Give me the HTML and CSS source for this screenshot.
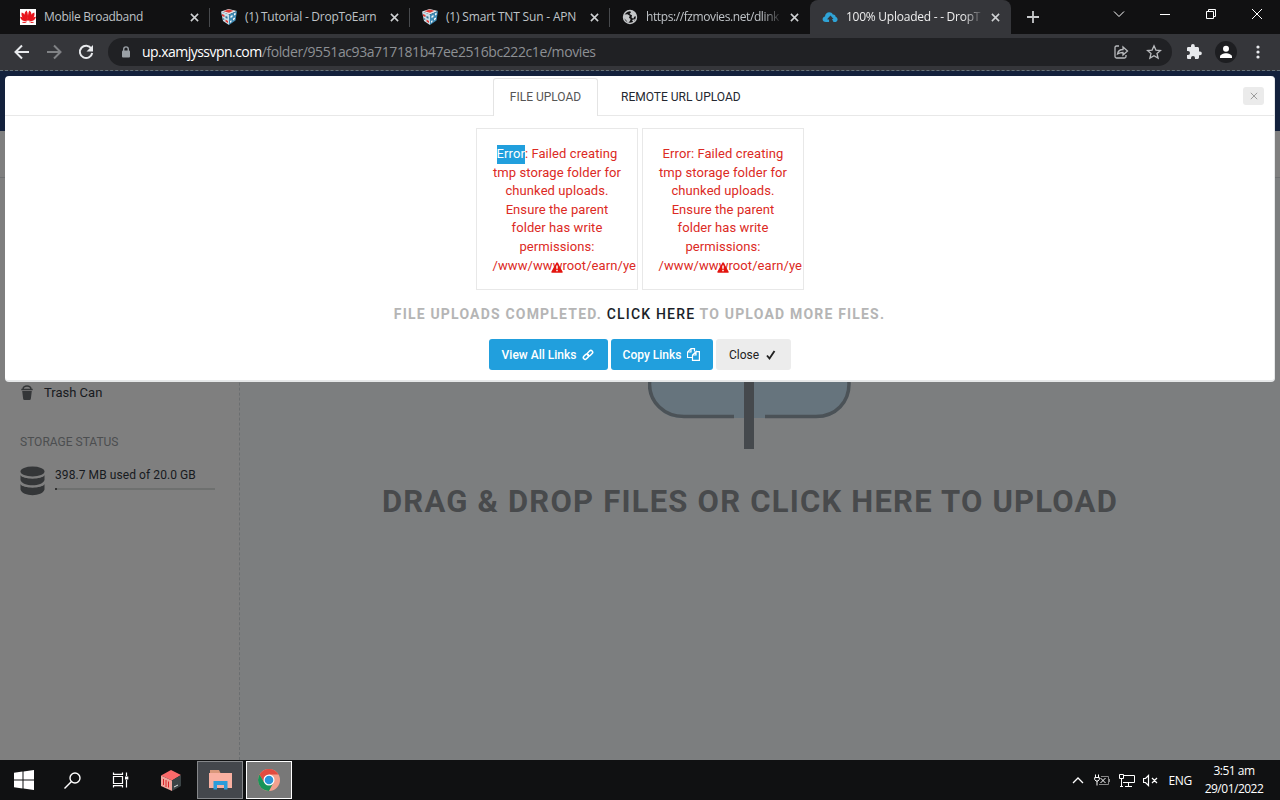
FILE: index.html
```html
<!DOCTYPE html>
<html lang="en">
<head>
    <meta charset="UTF-8">
    <meta name="viewport" content="width=device-width, initial-scale=1.0">
    <title>100% Uploaded - - DropToEarn</title>
    <link rel="stylesheet" href="styles.css">
</head>
<body>
    <svg class="defs" width="0" height="0">
        <symbol id="close" viewBox="0 0 10 10"><path d="M1 1l8 8M9 1L1 9"/></symbol>
        <symbol id="dice" viewBox="0 0 16 16">
            <path fill="#dfe8ee" d="M0 2.500L7.500 0 16 2 8 5.500z"/>
            <path fill="#c9dfe9" d="M0 2.500l8 3V16l-6-4z"/>
            <path fill="#3f8ab4" d="M8 5.500L16 2l-1.500 9.500L8 16z"/>
            <path fill="#e23b35" d="M2.500 2.300L7.500.6l5 1.200-4.500 2zM1 5l2.500 1v2L1 7zM4.500 10.500l2.500 1.600v2l-2.500-1.600z"/>
            <path fill="#f4f6f7" d="M9.500 7l2-1v2l-2 1zM13 4.500l1.600-.8v2l-1.600.8zM12 9.500l2-1V10l-2 1.500zM9 12l1.500-.8v1.600L9 14z"/>
            <path fill="#37718f" d="M4.500 7l2 .8v2l-2-.8zM1.800 9l1.500.8v1.500l-1.500-1z"/>
        </symbol>
        <symbol id="warn" viewBox="0 0 12 11">
            <path fill="#e3150f" stroke="#e3150f" stroke-width="1.500" stroke-linejoin="round" d="M6 1l5 9H1z"/>
            <path stroke="#fff" stroke-width="1.500" d="M6 3.500v3.200M6 7.800v1.400"/>
        </symbol>
    </svg>

    <!-- Tab strip -->
    <div class="tabs">
        <div class="tab">
            <svg class="favicon" viewBox="0 0 16 16"><rect width="16" height="16" fill="#fff"/><g fill="#e8141c"><path d="M7.900 12C4 8.500 3.500 3.500 6.600 1.500c1.400 2 1.700 6.500 1.300 10.500zM8.100 12c3.900-3.500 4.400-8.500 1.300-10.500-1.400 2-1.700 6.500-1.300 10.500z"/><path d="M7.200 12C3 10.500.7 7 1.700 3.500 5 4.700 7 8 7.200 12zM8.800 12c4.200-1.500 6.500-5 5.500-8.500C11 4.700 9 8 8.800 12z"/><path d="M6.900 12.300C3.500 12.600.7 11 0 7.700c2.900 0 5.700 1.800 6.900 4.600zM9.100 12.300c3.400.3 6.200-1.300 6.900-4.600-2.900 0-5.700 1.800-6.900 4.600z"/><path d="M6.900 12.800c-1.200 1.400-3.400 1.700-5.200.2zM9.100 12.800c1.200 1.400 3.400 1.700 5.200.2z"/></g></svg>
            <span class="tab-title t1">Mobile Broadband</span>
            <svg class="tab-close"><use href="#close"/></svg>
        </div>
        <div class="tab">
            <svg class="favicon"><use href="#dice"/></svg>
            <span class="tab-title t2">(1) Tutorial - DropToEarn</span>
            <svg class="tab-close"><use href="#close"/></svg>
        </div>
        <div class="tab shift">
            <svg class="favicon"><use href="#dice"/></svg>
            <span class="tab-title t3">(1) Smart TNT Sun - APN</span>
            <svg class="tab-close"><use href="#close"/></svg>
        </div>
        <div class="tab last shift">
            <svg class="favicon" viewBox="0 0 16 16"><circle cx="8" cy="8" r="6.500" fill="none" stroke="#c4c6c8" stroke-width="1.400"/><path fill="#c4c6c8" d="M2 5.500l3.500-.3 2.300 1.600-.8 2 1.600 1.200-.6 2L6 14l-2-3-2.500-2zM8 1.500l5 1.600 1.500 4-2 .3-1.300 2.300-1.700-1.200L10 6.200 7.500 5 9 3.300zM10 11l3-1-1.500 3.500z"/></svg>
            <span class="tab-title t4 fade">https://fzmovies.net/dlink</span>
            <svg class="tab-close"><use href="#close"/></svg>
        </div>
        <div class="tab active shift">
            <svg class="favicon" viewBox="0 0 16 16"><path fill="#2fa3d6" d="M4 13C1.600 13 .6 11.600.6 10.200.6 8.800 1.600 7.800 3 7.500 3 5 5 3.300 7.300 3.300c1.500 0 3 .8 3.500 2.200 1.500-.3 2.900.8 2.900 2.400 1.300.3 1.900 1.300 1.900 2.500 0 1.500-1.200 2.600-2.600 2.600h-1.500L8.500 7 5.200 10.500h2V13z"/><path fill="#35363a" d="M8.500 6.500l3 3.500H9.600v3.500H7.400V10h-2z"/></svg>
            <span class="tab-title t5 fade">100% Uploaded - - DropT</span>
            <svg class="tab-close"><use href="#close"/></svg>
        </div>
        <svg class="new-tab" viewBox="0 0 12 12"><path d="M6 0v12M0 6h12"/></svg>
        <div class="window-controls">
            <svg viewBox="0 0 12 12"><path d="M1 3.500l5 5 5-5"/></svg>
            <svg viewBox="0 0 12 12"><path d="M1 6.500h10"/></svg>
            <svg viewBox="0 0 12 12"><path d="M1.500 3.500h7v7h-7zM3.500 3.500v-2h7v7h-2"/></svg>
            <svg viewBox="0 0 12 12"><path d="M1 1l10 10M11 1L1 11"/></svg>
        </div>
    </div>

    <!-- Address bar -->
    <div class="toolbar">
        <svg class="nav-icon" viewBox="0 0 16 16"><path d="M15 8H2M8 1.500L1.500 8 8 14.500"/></svg>
        <svg class="nav-icon dim" viewBox="0 0 16 16"><path d="M1 8h13M8 1.500L14.500 8 8 14.500"/></svg>
        <svg class="nav-icon" viewBox="0 0 16 16"><path d="M13.300 4.500A6.200 6.200 0 1 0 14.200 9"/><path fill="#e8eaed" stroke="none" d="M15 1v6.500H8.500z"/></svg>
        <div class="omnibox">
            <svg class="lock" viewBox="0 0 10 12"><rect x="1" y="4.500" width="8" height="7" rx="1" fill="#9aa0a6"/><path d="M2.700 5V3.200a2.300 2.300 0 0 1 4.600 0V5" fill="none" stroke="#9aa0a6" stroke-width="1.400"/></svg>
            <span class="host">up.xamjyssvpn.com</span><span class="path">/folder/9551ac93a717181b47ee2516bc222c1e/movies</span>
            <svg class="share" viewBox="0 0 16 16"><path d="M6 2H3.500Q2 2 2 3.500v9Q2 14 3.500 14h8q1.500 0 1.500-1.500V11M4.500 10C5 7 7 5.500 10 5.500V3l4.500 4L10 11V8.500C7.500 8.500 6 9 4.500 10z"/></svg>
            <svg class="star" viewBox="0 0 16 16"><path d="M8 1.800l1.900 4.300 4.600.4-3.500 3 1.100 4.600L8 11.700l-4.100 2.400L5 9.500l-3.500-3 4.600-.4z"/></svg>
        </div>
        <svg class="puzzle" viewBox="0 0 16 16"><path fill="#e8eaed" d="M14 7.500h-1V4.600C13 3.700 12.400 3 11.500 3H8.800V2a1.900 1.900 0 0 0-3.800 0v1H2.300C1.500 3 1 3.600 1 4.300V7h1a2 2 0 0 1 0 4H1v2.700c0 .8.600 1.300 1.300 1.300H5v-1a2 2 0 0 1 4 0v1h2.600c.8 0 1.400-.6 1.400-1.400v-2.400h1a1.850 1.850 0 0 0 0-3.700z"/></svg>
        <svg class="avatar" viewBox="0 0 22 22"><circle cx="11" cy="11" r="11" fill="#1d1e21"/><circle cx="11" cy="7.700" r="3" fill="#fff"/><path fill="#fff" d="M5 17v-1.500c0-2 3.500-3.300 6-3.300s6 1.300 6 3.300V17z"/></svg>
        <svg class="menu" viewBox="0 0 4 14"><g fill="#e8eaed"><circle cx="2" cy="2" r="1.600"/><circle cx="2" cy="7" r="1.600"/><circle cx="2" cy="12" r="1.600"/></g></svg>
    </div>

    <div class="page">
        <div class="site-header"></div>
        <div class="site-bar"></div>
        <div class="content">
            <div class="sidebar">
                <div class="trash">
                    <svg viewBox="0 0 12 15"><path fill="#343638" d="M1.200 6h9.600l-.9 7.500q-.1 1.500-1.400 1.500h-5Q2.200 15 2.100 13.500z"/><path fill="none" stroke="#343638" stroke-width="1.500" d="M.3 4.500h11.400M2 4C2.300 1.800 4 1 6 1s3.700.8 4 3"/></svg>
                    <span>Trash Can</span>
                </div>
                <div class="side-title"><span>STORAGE STATUS</span></div>
                <div class="storage">
                    <svg viewBox="0 0 25 30"><g fill="#343638"><ellipse cx="12.500" cy="5.500" rx="12" ry="5"/><path d="M.5 9c3 4.500 21 4.500 24 0v5c-2 7-22 7-24 0z"/><path d="M.5 18c3 4.500 21 4.500 24 0v5.500c-2 7.500-22 7.500-24 0z"/></g><path stroke="#7f7f7f" stroke-width="1.200" fill="none" d="M.5 8.500c3 4.600 21 4.600 24 0M.5 17.500c3 4.600 21 4.600 24 0"/></svg>
                    <div class="usage">
                        <span>398.7 MB used of 20.0 GB</span>
                        <div class="usage-bar"><div class="usage-fill" style="width: 1%"></div></div>
                    </div>
                </div>
            </div>
            <div class="dropzone">
                <svg class="cloud" viewBox="0 0 204 160">
                    <path fill="#66747d" d="M34 128C14 128 1 112 1 94c0-20 12-32 28-35C30 24 58 4 92 4c30 0 54 16 60 44 30 0 50 18 50 46 0 18-13 34-33 34z"/>
                    <path fill="none" stroke="#4b5257" stroke-width="3.500" d="M86 126.500H36C16 126.500 1.500 112 1.500 94c0-20 12-32 28-35M117 126.500h51c20 0 33-14.500 33-32.500 0-28-20-46-50-46"/>
                    <path stroke="#45494d" stroke-width="10" d="M101 60v99"/>
                </svg>
                <h1>DRAG &amp; DROP FILES OR CLICK HERE TO UPLOAD</h1>
            </div>
        </div>

        <!-- Upload popup -->
        <div class="modal">
            <div class="modal-tabs">
                <div class="modal-tab active"><span>FILE UPLOAD</span></div>
                <div class="modal-tab"><span>REMOTE URL UPLOAD</span></div>
                <div class="modal-close"><svg viewBox="0 0 10 10"><use href="#close"/></svg></div>
            </div>
            <div class="files">
                <div class="file">
                    <p><mark>Error</mark>: Failed creating<br>tmp storage folder for<br>chunked uploads.<br>Ensure the parent<br>folder has write<br>permissions:</p>
                    <p class="file-path">/www/wwwroot/earn/ye</p>
                    <svg class="warn"><use href="#warn"/></svg>
                </div>
                <div class="file">
                    <p>Error: Failed creating<br>tmp storage folder for<br>chunked uploads.<br>Ensure the parent<br>folder has write<br>permissions:</p>
                    <p class="file-path">/www/wwwroot/earn/ye</p>
                    <svg class="warn"><use href="#warn"/></svg>
                </div>
            </div>
            <div class="status">FILE UPLOADS COMPLETED. <a>CLICK HERE</a> TO UPLOAD MORE FILES.</div>
            <div class="buttons">
                <div class="button view">View All Links <svg viewBox="0 0 12 12"><g fill="none" stroke="#fff" stroke-width="1.500"><rect x="5" y="2.300" width="6" height="3.600" rx="1.800" transform="rotate(-45 8 4.100)"/><rect x="1" y="5.900" width="6" height="3.600" rx="1.800" transform="rotate(-45 4 7.700)"/></g></svg></div>
                <div class="button copy">Copy Links <svg viewBox="0 0 13 13"><path fill="none" stroke="#fff" stroke-width="1.200" d="M5.500 9.500h-5V4L4 .6h3.500v3M4 .6V4H.6M9 3.600h3.400v8.800H5.500V7L9 3.600V7H5.500"/></svg></div>
                <div class="button close">Close <svg viewBox="0 0 12 12"><path fill="none" stroke="#222" stroke-width="1.900" d="M2 6.500l2.500 3L9.500 2"/></svg></div>
            </div>
        </div>
    </div>

    <div class="taskbar">
        <div class="task"><svg width="20" height="20" viewBox="0 0 20 20"><path fill="#fff" d="M0 2.800L8.500 1.500v8H0zM9.500 1.400L20 0v9.500H9.500zM0 10.500h8.500v8L0 17.200zM9.500 10.500H20V20L9.500 18.600z"/></svg></div>
        <div class="task"><svg width="17" height="17" viewBox="0 0 17 17"><g fill="none" stroke="#fff" stroke-width="1.400"><circle cx="11" cy="6" r="5"/><path d="M7.500 9.500L.5 16.500"/></g></svg></div>
        <div class="task"><svg width="17" height="16" viewBox="0 0 17 16"><g fill="none" stroke="#fff" stroke-width="1.200"><path d="M1.500 4.500h9v7h-9zM1.500.5v1.800h9V.5M1.500 15.500v-1.800h9v1.800M14.500.5V4M14.500 8v7.500"/></g><path fill="#fff" d="M13 4.500h3.300v3H13z"/></svg></div>
        <div class="task wide"><svg width="20" height="21" viewBox="0 0 20 21"><path fill="#fb6a6a" d="M0 5.500L10 0l10 5-9 5.500z"/><path fill="#f3a59c" d="M0 5.500l11 5V21L0 16z"/><path fill="#3b4446" d="M11 10.500L20 5v11l-9 5z"/><path stroke="#d8262a" stroke-width="1" d="M2.500 9v6M5 10v7M7.500 11.500v6"/><path stroke="#dfe3e3" d="M13 17l4-2"/></svg></div>
        <div class="task open"><svg width="23" height="20" viewBox="0 0 23 20"><path fill="#d9987b" d="M1 0h9l1.500 3H22v5H1z"/><path fill="#f8b0a1" d="M0 3h23v15H0z"/><path fill="#2b9cda" d="M4.500 19.500V11h14v8.500H15V15H8v4.500z"/></svg></div>
        <div class="task open current"><svg width="24" height="24" viewBox="0 0 24 24"><circle cx="12" cy="12" r="11" fill="#f3a08e"/><path fill="#e24b40" d="M2.500 6.500A11 11 0 0 1 21.500 6.500H12L7.200 14.500z"/><path fill="#179458" d="M2.500 6.500A11 11 0 0 0 12 23l4.500-8.500H7.200z"/><circle cx="12" cy="12" r="5.500" fill="#fff"/><circle cx="12" cy="12" r="4.300" fill="#2b93d8"/></svg></div>
        <div class="tray">
            <svg width="12" height="8" viewBox="0 0 12 8"><path stroke-width="1.300" d="M1 7l5-5 5 5"/></svg>
            <svg class="battery" width="16" height="12" viewBox="0 0 16 12"><path d="M1.500.5V3M4.500.5V3M.7 3.500h4.600v2L4 7H2L.7 5.500zM3 7v4.500M6.500 4l5 5M11.500 4l-5 5"/><path stroke="#888" d="M7 2.500h7.500v8H5M15.500 5v3"/></svg>
            <svg class="network" width="16" height="13" viewBox="0 0 16 13"><path d="M5 1.500h10.500v7H4M9.500 8.500v4M6 12.500h7M.5.500h4v4h-4zM2.500 4.500v8M1 12.500h3"/></svg>
            <svg class="volume" width="15" height="13" viewBox="0 0 15 13"><path stroke-width="1.200" d="M.5 4.500h2l3-3v10l-3-3h-2zM9 4l5 5M14 4L9 9"/></svg>
            <span class="lang">ENG</span>
            <div class="clock"><span class="time">3:51 am</span><span class="date">29/01/2022</span></div>
        </div>
    </div>
</body>
</html>
```
FILE: styles.css
```css
* {
    box-sizing: border-box;
}
body {
    margin: 0;
    width: 1280px;
    height: 800px;
    display: flex;
    flex-direction: column;
    overflow: hidden;
    font-family: Roboto, "Liberation Sans", sans-serif;
    background: #111;
}
svg {
    flex: none;
    display: block;
}
.defs {
    display: none;
}
p, h1 {
    margin: 0;
}

/* tabs */
.tabs {
    height: 34px;
    flex: none;
    display: flex;
    align-items: center;
    padding-left: 10px;
    background: #111112;
    font-family: "Open Sans", "Noto Sans", sans-serif;
    font-size: 12px;
    color: #bfc3c7;
}
.tab {
    width: 200px;
    height: 34px;
    display: flex;
    align-items: center;
    padding: 0 11px 0 10px;
    position: relative;
}
.tab + .tab {
    padding-left: 11px;
}
.tab.shift {
    padding-left: 12px;
}
.tab::after {
    content: "";
    position: absolute;
    right: 0;
    top: 8px;
    width: 1px;
    height: 19px;
    background: #47494c;
}
.tab.last::after,
.tab.active::after {
    display: none;
}
.tab.active {
    width: 201px;
    background: #35363a;
    border-radius: 8px 8px 0 0;
    color: #eee;
}
.favicon {
    width: 16px;
    height: 16px;
    margin-right: 8px;
}
.tab-title {
    flex: 1;
    white-space: nowrap;
    line-height: 18px;
}
.t1 {
    letter-spacing: -0.300px;
}
.t2 {
    letter-spacing: -0.260px;
}
.t3 {
    letter-spacing: -0.180px;
}
.t4 {
    letter-spacing: -0.400px;
}
.t5 {
    letter-spacing: -0.250px;
}
.fade {
    -webkit-mask-image: linear-gradient(90deg, #000 85%, transparent);
    mask-image: linear-gradient(90deg, #000 85%, transparent);
}
.tab-close {
    width: 9px;
    height: 9px;
    margin-left: 7px;
    fill: none;
    stroke: #d0d2d4;
    stroke-width: 1.700;
}
.new-tab {
    width: 12px;
    height: 12px;
    margin-left: 16px;
    stroke: #c7c9cb;
    stroke-width: 1.800;
}
.window-controls {
    display: flex;
    gap: 34px;
    margin-left: auto;
    margin-right: 17px;
    padding-bottom: 6px;
}
.window-controls svg {
    width: 12px;
    height: 12px;
    fill: none;
    stroke: #fff;
}

/* address bar */
.toolbar {
    height: 37px;
    flex: none;
    display: flex;
    align-items: center;
    padding: 0 0 1px 14px;
    background: #35363a;
    border-bottom: 1px dashed #66727a;
}
.nav-icon {
    width: 16px;
    height: 16px;
    margin-right: 16px;
    fill: none;
    stroke: #e8eaed;
    stroke-width: 2;
}
.nav-icon.dim {
    stroke: #808285;
}
.omnibox {
    width: 1064px;
    height: 28px;
    margin-left: -2px;
    border-radius: 14px;
    background: #202124;
    display: flex;
    align-items: center;
    padding: 0 10px 0 13px;
    font: 14px "Open Sans", "Noto Sans", sans-serif;
}
.lock {
    width: 10px;
    height: 12px;
    margin-right: 11px;
}
.host {
    color: #fff;
    letter-spacing: -0.530px;
}
.path {
    color: #8d9094;
    letter-spacing: -0.410px;
}
.share, .star {
    width: 16px;
    height: 16px;
    fill: none;
    stroke: #b8babd;
    stroke-width: 1.300;
}
.share {
    margin-left: auto;
    margin-right: 17px;
}
.puzzle {
    width: 16px;
    height: 16px;
    margin-left: 14px;
}
.avatar {
    width: 22px;
    height: 22px;
    margin-left: 13px;
}
.menu {
    width: 4px;
    height: 14px;
    margin-left: 19px;
}

/* page below the popup */
.page {
    height: 689px;
    flex: none;
    display: flex;
    flex-direction: column;
    position: relative;
    background: #7c7e7f;
}
.site-header {
    height: 60px;
    background: #13213c;
}
.site-bar {
    height: 47px;
    background: #7f7f7f;
    border-bottom: 1px solid #6e7072;
}
.content {
    flex: 1;
    display: flex;
}
.sidebar {
    width: 240px;
    padding: 206px 0 0 20px;
    background: #7f7f7f;
    border-right: 1px dashed #6b6e70;
}
.trash {
    height: 17px;
    display: flex;
    align-items: center;
    gap: 11px;
    padding-left: 1px;
    font-size: 13px;
    color: #171a20;
}
.trash svg {
    width: 12px;
    height: 15px;
}
.side-title {
    margin-top: 33px;
    font-size: 12px;
    line-height: 16px;
    color: #4c4e50;
}
.storage {
    display: flex;
    gap: 10px;
    margin-top: 16px;
}
.storage svg {
    width: 25px;
    height: 30px;
}
.usage {
    font-size: 12px;
    line-height: 18px;
    letter-spacing: 0.080px;
    color: #171a20;
}
.usage-bar {
    width: 160px;
    height: 2px;
    margin-top: 4px;
    background: #6e706f;
}
.usage-fill {
    height: 2px;
    background: #333;
}
.dropzone {
    flex: 1;
    display: flex;
    flex-direction: column;
    align-items: center;
    padding: 112px 20px 0 0;
}
.cloud {
    width: 204px;
    height: 160px;
}
h1 {
    margin-top: 32px;
    font-size: 31px;
    line-height: 40px;
    font-weight: 700;
    letter-spacing: 1.220px;
    white-space: nowrap;
    color: #484a4c;
}

/* upload popup */
.modal {
    position: absolute;
    left: 5px;
    top: 5px;
    width: 1270px;
    height: 306px;
    background: #fff;
    border-radius: 4px;
    border-bottom: 2px solid #e6e8e9;
    border-right: 1px solid #e6e8e9;
    display: flex;
    flex-direction: column;
    align-items: center;
}
.modal-tabs {
    width: 100%;
    height: 40px;
    display: flex;
    align-items: flex-end;
    padding-left: 488px;
    border-bottom: 1px solid #e8e8e8;
    font-size: 12px;
    color: #23272f;
}
.modal-tab {
    height: 37px;
    padding: 0 23px;
    line-height: 39px;
}
.modal-tab.active {
    width: 105px;
    height: 38px;
    margin-bottom: -1px;
    padding: 0;
    text-align: center;
    line-height: 37px;
    background: #fff;
    border: 1px solid #e4e4e4;
    border-bottom: 0;
    border-radius: 3px 3px 0 0;
    color: #555;
}
.modal-close {
    width: 21px;
    height: 18px;
    margin: 0 10px 10px auto;
    display: flex;
    align-items: center;
    justify-content: center;
    border-radius: 3px;
    background: #ebebeb;
}
.modal-close svg {
    width: 8px;
    height: 8px;
    stroke: #999;
    stroke-width: 1.200;
}
.files {
    display: flex;
    gap: 4px;
    margin-top: 12px;
}
.file {
    position: relative;
    width: 162px;
    height: 162px;
    padding: 16px 15px 14px 16px;
    border: 1px solid #e8e8e8;
    font-size: 13px;
    line-height: 18.600px;
    letter-spacing: 0.080px;
    text-align: center;
    white-space: nowrap;
    color: #dc2a24;
}
.file mark {
    display: inline-block;
    background: #219fdd;
    color: #fff;
}
.file-path {
    text-align: left;
    letter-spacing: 0.080px;
}
.warn {
    position: absolute;
    left: 74px;
    top: 133px;
    width: 12px;
    height: 11px;
}
.status {
    margin-top: 15px;
    font-size: 14px;
    line-height: 18px;
    font-weight: 700;
    letter-spacing: 1.190px;
    white-space: nowrap;
    color: #b5b5b5;
}
.status a {
    color: #1b1f29;
    font-weight: 500;
}
.buttons {
    display: flex;
    gap: 3px;
    margin-top: 16px;
}
.button {
    height: 31px;
    display: flex;
    align-items: center;
    justify-content: center;
    gap: 6px;
    border-radius: 3px;
    background: #219fdd;
    color: #fff;
    font-size: 12px;
    font-weight: 500;
}
.button svg {
    width: 12px;
    height: 12px;
}
.view {
    width: 119px;
}
.copy {
    width: 102px;
}
.copy svg {
    width: 13px;
    height: 13px;
}
.close {
    width: 75px;
    background: #ececec;
    color: #222;
    font-weight: 400;
}

/* taskbar */
.taskbar {
    height: 40px;
    flex: none;
    display: flex;
    align-items: center;
    background: #101112;
    color: #fff;
    font: 12px "Open Sans", "Noto Sans", sans-serif;
}
.task {
    width: 48px;
    height: 40px;
    display: flex;
    align-items: center;
    justify-content: center;
}
.task.wide {
    width: 53px;
}
.task.open {
    width: 46px;
    height: 38px;
    margin-right: 3px;
    background: #44474c;
    border: 1px solid #85878a;
}
.task.current {
    background: #787878;
    border-color: #fff;
}
.tray {
    display: flex;
    align-items: center;
    margin-left: auto;
    margin-right: 16px;
}
.tray svg {
    fill: none;
    stroke: #fff;
}
.battery {
    margin-left: 10px;
}
.network {
    margin-left: 9px;
}
.volume {
    margin-left: 8px;
}
.lang {
    margin-left: 10px;
    letter-spacing: -0.300px;
}
.clock {
    width: 60px;
    margin-left: 12px;
    display: flex;
    flex-direction: column;
    align-items: center;
    line-height: 18px;
    letter-spacing: -0.500px;
}
```
